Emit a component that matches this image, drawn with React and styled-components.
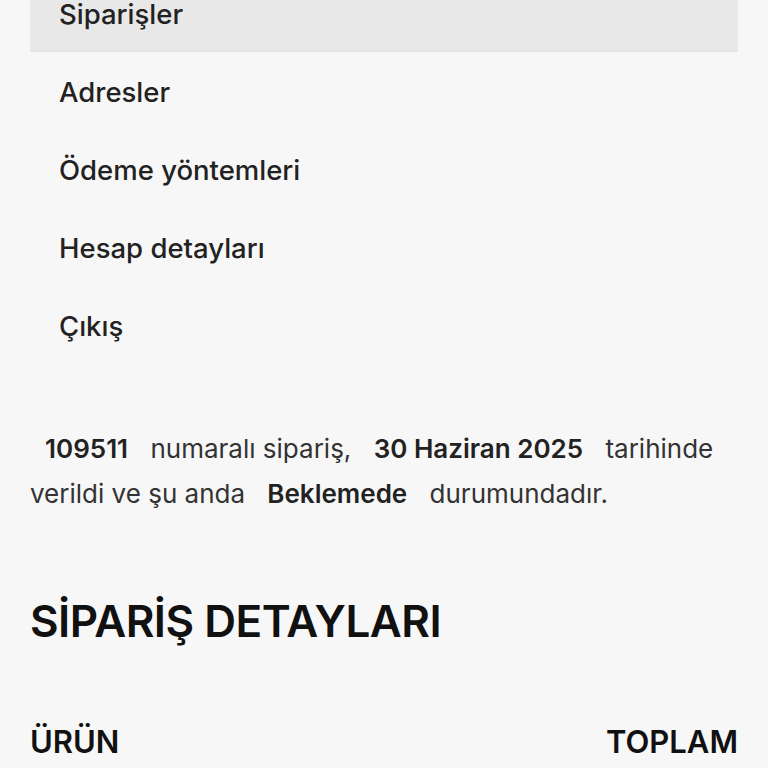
import React from "react";
import styled, { createGlobalStyle } from "styled-components";

const Global = createGlobalStyle`
  html, body { margin: 0; padding: 0; background: #f7f7f7; }
  body { font-family: Inter, "Noto Sans", sans-serif; color: #222; -webkit-font-smoothing: antialiased; }
`;

const Page = styled.div`
  padding: 0 30px;
  overflow: hidden;
  height: 768px;
`;

const Nav = styled.ul`
  list-style: none;
  margin: -27px 0 0;
  padding: 0;
`;

const NavItem = styled.li`
  padding: 23px 29px 19px;
  font-size: 27.5px;
  line-height: 36px;
  font-weight: 500;
  color: #222;
  background: ${(p) => (p.$active ? "#e8e8e8" : "transparent")};
  box-shadow: ${(p) => (p.$active ? "0 1px 0 #e2e2e2" : "none")};
`;

const Notice = styled.p`
  margin: 63px 0 0;
  font-size: 26px;
  line-height: 45px;
  color: #333;
`;

const Mark = styled.mark`
  background: transparent;
  color: #222;
  font-weight: 600;
  margin: 0 15px;
`;

const Heading = styled.h2`
  margin: 77px 0 0;
  font-size: 44px;
  line-height: 56px;
  font-weight: 600;
  letter-spacing: -0.5px;
  color: #111;
`;

const TableHead = styled.div`
  display: flex;
  justify-content: space-between;
  margin-top: 73px;
  font-size: 31px;
  line-height: 40px;
  font-weight: 600;
  color: #111;
`;

export default function App() {
  const items = ["Siparişler", "Adresler", "Ödeme yöntemleri", "Hesap detayları", "Çıkış"];
  return (
    <>
      <Global />
      <Page>
        <Nav>
          {items.map((t, i) => (
            <NavItem key={t} $active={i === 0}>{t}</NavItem>
          ))}
        </Nav>
        <Notice>
          <Mark>109511</Mark> numaralı sipariş, <Mark>30 Haziran 2025</Mark> tarihinde verildi ve şu anda <Mark>Beklemede</Mark> durumundadır.
        </Notice>
        <Heading>SİPARİŞ DETAYLARI</Heading>
        <TableHead>
          <span>ÜRÜN</span>
          <span>TOPLAM</span>
        </TableHead>
      </Page>
    </>
  );
}
